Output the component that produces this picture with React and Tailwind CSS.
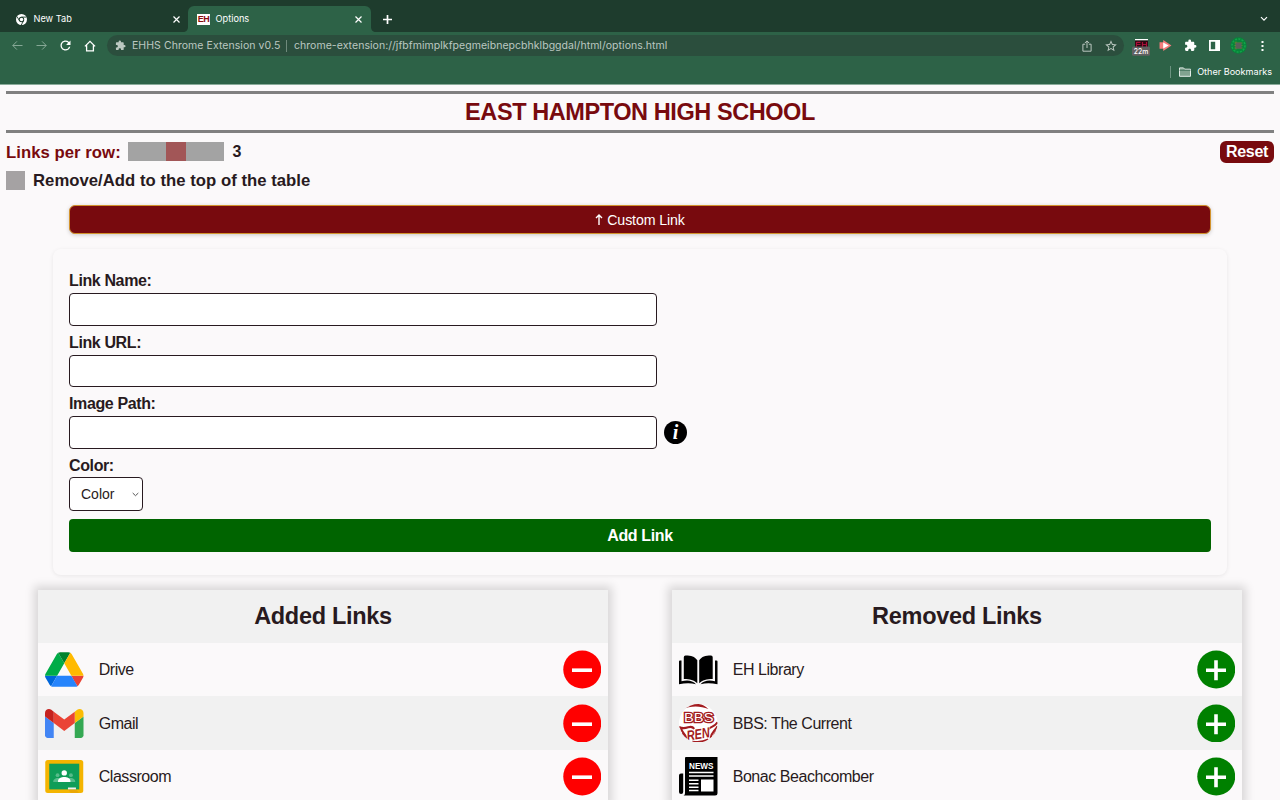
import React from "react";
import { MdExtension, MdRefresh, MdStarBorder } from "react-icons/md";

function ChromeLogo() {
  return (
    <svg className="h-[11px] w-[11px]" viewBox="0 0 22 22">
      <circle cx="11" cy="11" r="11" fill="#fff" />
      <circle cx="11" cy="11" r="5.4" fill="#1e3c2d" />
      <circle cx="11" cy="11" r="3.5" fill="#fff" />
      <g stroke="#1e3c2d" strokeWidth="1.8">
        <path d="M11 6.2h10M6.8 13.4 2 5M15.2 13.4 10.5 22" />
      </g>
    </svg>
  );
}

function CloseIcon() {
  return (
    <svg className="h-[7px] w-[7px]" viewBox="0 0 7 7" stroke="#fff" strokeWidth="1.2">
      <path d="m.5.5 6 6M6.500.5l-6 6" />
    </svg>
  );
}

function TabStrip() {
  return (
    <div className="flex h-8 items-end bg-[#1e3c2d] text-[9.2px] text-white">
      <div className="relative flex h-[26px] w-[188px] items-center pl-4 pr-[8px]">
        <ChromeLogo />
        <span className="ml-[6.500px] flex-1">New Tab</span>
        <CloseIcon />
        <svg className="absolute bottom-0 right-0 h-[5px] w-[5px]" viewBox="0 0 5 5">
          <path d="M5 0v5H0c3 0 5-2 5-5" fill="#2d6247" />
        </svg>
      </div>
      <div className="flex h-[26px] w-[183px] items-center rounded-t-[6px] bg-[#2d6247] pl-[9px] pr-[9px]">
        <span className="flex h-[11px] w-[13px] items-center justify-center bg-white font-['Liberation_Sans'] text-[9px] font-bold tracking-[-0.4px] text-[#8b0d10]">
          EH
        </span>
        <span className="ml-[5.500px] flex-1">Options</span>
        <CloseIcon />
      </div>
      <div className="relative flex h-[26px] flex-1 items-center justify-between pl-[12px] pr-[12px]">
        <svg className="absolute bottom-0 left-0 h-[5px] w-[5px]" viewBox="0 0 5 5">
          <path d="M0 0v5h5C2 5 0 3 0 0" fill="#2d6247" />
        </svg>
        <svg className="h-[9px] w-[9px]" viewBox="0 0 9 9" stroke="#fff" strokeWidth="1.700">
          <path d="M0 4.500h9M4.500 0v9" />
        </svg>
        <svg className="h-[6px] w-[8px]" viewBox="0 0 8 6" fill="none" stroke="#fff" strokeWidth="1.2">
          <path d="m1 1.2 3 3 3-3" />
        </svg>
      </div>
    </div>
  );
}

function Arrow({ flip }) {
  return (
    <svg className={flip ? "h-[11px] w-[11px] rotate-180" : "h-[11px] w-[11px]"} viewBox="0 0 11 11" fill="none" stroke="#86a896" strokeWidth="1">
      <path d="M10.500 5.500H.8M4.900 1.400.8 5.500l4.100 4.100" />
    </svg>
  );
}

function Toolbar() {
  return (
    <div className="h-[53px] border-b border-[#8aab9a] bg-[#2d6247]">
      <div className="flex h-[27px] items-center pl-3">
        <Arrow />
        <span className="w-[13px]" />
        <Arrow flip />
        <MdRefresh className="ml-[11px] h-[15px] w-[15px] text-white" />
        <svg className="ml-[11px] h-[12px] w-[12px]" viewBox="0 0 12 12" fill="none" stroke="#fff" strokeWidth="1.3">
          <path d="M.9 6.4 6 1.3l5.1 5.1M2.6 5.2v5.6h6.8V5.2" />
        </svg>
        <div className="ml-[11px] flex h-[21px] w-[1017px] items-center rounded-full bg-[#2b4e3d] pl-2 pr-[6px] text-[10.500px] text-[#bcc8c1]">
          <MdExtension className="h-[11px] w-[11px]" />
          <span className="ml-[6px] w-[149px] whitespace-nowrap pt-[2px] tracking-[0.06px]">EHHS Chrome Extension v0.5</span>
          <span className="ml-[5px] mr-[7px] h-3 w-px bg-[#6f8a7c]" />
          <span className="flex-1 whitespace-nowrap pt-[2px] tracking-[0.040px]">chrome-extension://jfbfmimplkfpegmeibnepcbhklbggdal/html/options.html</span>
          <svg className="h-[12px] w-[10px]" viewBox="0 0 10 12" fill="none" stroke="#bcc8c1" strokeWidth="1">
            <path d="M3.2 4.2H.9v7h8.2v-7H6.8M5 8V1M2.9 3 5 .9 7.1 3" />
          </svg>
          <MdStarBorder className="ml-[12px] h-[14px] w-[14px]" />
        </div>
        <svg className="ml-[8px] h-[17px] w-[18px] shrink-0 translate-y-[2px]" viewBox="0 0 18 17">
          <path d="M3 0h13v1.500H3z" fill="#fff" />
          <path d="M3 1.500h13V9H3z" fill="#2a0710" />
          <path d="M4.500 3v5M4.500 3.400h4M4.500 5.500h4M10.500 3v5M14.500 3v5M10.500 5.500h4" stroke="#a80f38" strokeWidth="1.200" fill="none" />
          <rect y="7.500" width="18" height="9.200" rx="1.500" fill="#616161" />
          <text x="1.800" y="14.800" textLength="14.500" lengthAdjust="spacingAndGlyphs" fontFamily="Inter" fontWeight="500" fontSize="7.200" fill="#fff">
            22m
          </text>
        </svg>
        <svg className="ml-[9px] h-[11px] w-[13px]" viewBox="0 0 13 12">
          <path d="M0 2.500h4V0l9 6-9 6V9.500H0z" fill="#f27c7c" />
          <path d="M4 2.800 10 6 4 9.400z" fill="#fff" />
        </svg>
        <MdExtension className="ml-[12px] h-[13px] w-[13px] text-white" />
        <svg className="ml-[12px] h-[11px] w-[11px]" viewBox="0 0 11 11">
          <path d="M0 0h11v11H0zM1.8 1.8v7.4h4.4V1.8z" fill="#fff" fillRule="evenodd" />
        </svg>
        <svg className="ml-[10px] h-[17px] w-[17px]" viewBox="0 0 17 17">
          <circle cx="8.5" cy="8.5" r="8.2" fill="#08843a" />
          <circle cx="8.5" cy="8.5" r="6.5" fill="none" stroke="#13a34b" strokeWidth="1.500" strokeDasharray="2 1.3" />
          <path d="M4.5 6h8M4.5 8.5h8M4.5 11h8M6 4.5v8" stroke="#b59322" strokeWidth=".5" />
          <rect x="5.6" y="5.6" width="6" height="6" fill="#5a5f5a" />
        </svg>
        <svg className="ml-[14px] h-[10px] w-[3px]" viewBox="0 0 3 10" fill="#fff">
          <rect x=".5" width="2" height="2" />
          <rect x=".5" y="4" width="2" height="2" />
          <rect x=".5" y="8" width="2" height="2" />
        </svg>
      </div>
      <div className="flex h-[25px] items-center justify-end pr-2 text-[9.100px] text-white">
        <span className="h-3 w-px bg-[#6c9380]" />
        <svg className="ml-2 h-[10px] w-[12px]" viewBox="0 0 12 10">
          <path d="M.5.9h4l1.2 1.3h5.8v7.1H.5z" fill="#81a390" stroke="#e2ebe6" strokeWidth="1" />
          <path d="M.5 3.3h11" stroke="#2d6247" strokeWidth=".7" />
        </svg>
        <span className="ml-[6px]">Other Bookmarks</span>
      </div>
    </div>
  );
}

function Field({ label, children }) {
  return (
    <div className="h-[61.500px]">
      <div className="flex h-[28.500px] items-center pt-[5px] text-[16px] font-bold tracking-[-0.380px]">{label}</div>
      <div className="flex items-center">
        <input className="h-[32.500px] w-[588px] rounded-[4px] border border-[#281a20] bg-white" />
        {children}
      </div>
    </div>
  );
}

function DriveIcon() {
  return (
    <svg className="h-[35px] w-[38.5px]" viewBox="0 0 87.3 78">
      <path d="m6.6 66.85 3.85 6.65c.8 1.4 1.95 2.5 3.3 3.3l13.75-23.8h-27.5c0 1.55.4 3.1 1.2 4.5z" fill="#0066da" />
      <path d="m43.65 25-13.75-23.8c-1.35.8-2.5 1.9-3.3 3.3l-25.4 44a9.06 9.06 0 0 0-1.2 4.5h27.5z" fill="#00ac47" />
      <path d="m73.55 76.8c1.35-.8 2.5-1.9 3.3-3.3l1.6-2.75 7.65-13.25c.8-1.4 1.2-2.95 1.2-4.5h-27.502l5.852 11.5z" fill="#ea4335" />
      <path d="m43.65 25 13.75-23.8c-1.35-.8-2.9-1.2-4.5-1.2h-18.5c-1.6 0-3.15.45-4.5 1.2z" fill="#00832d" />
      <path d="m59.8 53h-32.3l-13.75 23.8c1.35.8 2.9 1.2 4.5 1.2h50.8c1.6 0 3.15-.45 4.5-1.2z" fill="#2684fc" />
      <path d="m73.4 26.5-12.7-22c-.8-1.4-1.95-2.5-3.3-3.3l-13.75 23.8 16.15 28h27.45c0-1.55-.4-3.1-1.2-4.5z" fill="#ffba00" />
    </svg>
  );
}

function GmailIcon() {
  return (
    <svg className="h-[29px] w-[38.5px]" viewBox="52 42 88 66">
      <path fill="#4285f4" d="M58 108h14V74L52 59v43c0 3.32 2.69 6 6 6" />
      <path fill="#34a853" d="M120 108h14c3.32 0 6-2.69 6-6V59l-20 15" />
      <path fill="#fbbc04" d="M120 48v26l20-15v-8c0-7.42-8.47-11.65-14.4-7.2" />
      <path fill="#ea4335" d="M72 74V48l24 18 24-18v26L96 92" />
      <path fill="#c5221f" d="M52 51v8l20 15V48l-5.6-4.2c-5.94-4.45-14.4-.22-14.4 7.2" />
    </svg>
  );
}

function ClassroomIcon() {
  return (
    <svg className="h-[33px] w-[38.5px]" viewBox="0 0 38 33">
      <rect width="38" height="33" rx="2.5" fill="#f4b400" />
      <rect x="4" y="3.7" width="30" height="25.7" fill="#0f9d58" />
      <g fill="#57bb8a">
        <circle cx="12.3" cy="15.2" r="1.9" />
        <circle cx="25.7" cy="15.2" r="1.9" />
        <path d="M8 22c0-3 2.500-4 4.300-4s3 .5 4 1.500V22zM30 22c0-3-2.500-4-4.300-4s-3 .5-4 1.500V22z" />
      </g>
      <circle cx="19" cy="12.900" r="2.700" fill="#fff" />
      <path d="M12.800 22v-1c0-2.700 3.400-4 6.200-4s6.200 1.300 6.200 4v1z" fill="#fff" />
      <path d="M22.700 27.500h8v2h-8z" fill="#f1f1f1" />
      <path d="M22.700 29.400h8l3 3.600h-8z" fill="#e39c07" opacity=".6" />
    </svg>
  );
}

function LibraryIcon() {
  return (
    <svg className="h-[30px] w-[38.5px]" viewBox="0 0 38.500 30">
      <path d="M1 5.500h1.500v20.800c6-1.500 11-.9 14.500 3-5-1.600-11-1.500-17 0V6.500a1 1 0 0 1 1-1M37.500 5.500H36v20.800c-6-1.500-11-.9-14.500 3 5-1.600 11-1.500 17 0V6.500a1 1 0 0 0-1-1" />
      <path d="M6.500.6c6 0 9 1.100 11.800 4.600v23C15 25 11 23.900 4.800 23.900V2.300A1.700 1.700 0 0 1 6.500.6" />
      <path d="M32 .6c-6 0-9 1.100-11.800 4.600v23c3.300-3.200 7.300-4.300 13.500-4.300V2.300A1.700 1.700 0 0 0 32 .6" />
    </svg>
  );
}

function BbsIcon() {
  return (
    <svg className="h-[38.500px] w-[38.500px]" viewBox="0 0 38 38">
      <clipPath id="bbs-disc">
        <circle cx="19" cy="19" r="19" />
      </clipPath>
      <g clipPath="url(#bbs-disc)">
        <rect width="38" height="38" fill="#fff" />
        <path d="M3 5.500C11 1.500 21 1.500 29 5 23-2 11-2 3 5.500" fill="#a31c20" />
        <text x="5" y="18" textLength="29" lengthAdjust="spacingAndGlyphs" fontFamily="Liberation Sans" fontWeight="400" fontSize="13.500" fill="#fff" stroke="#a31c20" strokeWidth="2.600" paintOrder="stroke">
          BBS
        </text>
        <path d="M0 22.500c3 2 6 1.500 9 .5s5 0 6 1.500M2 24c1 5 4 5 5 9M38 18c-3 5-7 4-9 7M38 22c-3 5-6 6-7 12M37 27c-2 3-3 4-3 7M3 29c2 1 3 3 5 5M13 37c5 1 11 .5 16-2" fill="none" stroke="#a31c20" strokeWidth="2" />
        <text x="7.500" y="34.500" transform="rotate(-9 19 30)" textLength="23" lengthAdjust="spacingAndGlyphs" fontFamily="Liberation Sans" fontWeight="700" fontStyle="italic" fontSize="14" fill="#a31c20" stroke="#fff" strokeWidth="1.200" paintOrder="stroke">
          REN
        </text>
      </g>
    </svg>
  );
}

function NewsIcon() {
  return (
    <svg className="h-[38.500px] w-[38.500px]" viewBox="0 0 38.500 38.500">
      <path d="M7 0h31.500v36a2.500 2.500 0 0 1-2.500 2.500H4.500C6 38 6 37 6 35V1a1 1 0 0 1 1-1M4.200 16.500V35A2.100 2.100 0 0 1 0 35V18.500a2 2 0 0 1 2-2z" />
      <text x="10" y="11.500" textLength="24.500" lengthAdjust="spacingAndGlyphs" fontFamily="Liberation Sans" fontWeight="700" fontSize="9.200" fill="#fff">
        NEWS
      </text>
      <path d="M10 15.400h24.500M10 19h24.500M10 23.200h9.500M10 26.700h9.500M10 30.200h9.500M10 33.600h9.500" stroke="#fff" strokeWidth="1.500" />
      <path d="M22 22.500h12.500v12H22z" fill="#fff" />
    </svg>
  );
}

function LinkCard({ title, rows, add }) {
  return (
    <div className="w-[570px] bg-[#fbf9fa] shadow-[0_0_9px_4px_rgba(0,0,0,0.14)]">
      <h2 className="flex h-[53.300px] items-center justify-center bg-[#f1f1f1] pt-[2px] text-[23.500px] font-bold tracking-[-0.300px]">{title}</h2>
      {rows.map(([name, icon]) => (
        <div key={name} className="flex h-[53.400px] items-center pl-[7px] pr-[7px] pt-[0.500px] odd:bg-[#f1f1f1] even:bg-[#fbf9fa]">
          <span className="flex w-[53.700px] items-center">{icon}</span>
          <span className="flex-1 pt-[1px] text-[16px] tracking-[-0.450px]">{name}</span>
          <svg className="h-[38.500px] w-[38.500px]" viewBox="0 0 38.500 38.500">
            <circle cx="19.250" cy="19.500" r="19" fill={add ? "#008000" : "#ff0000"} />
            <path d={add ? "M9 20.200h20M19 10.200v20" : "M9 20.200h20"} stroke="#fff" strokeWidth="3.600" />
          </svg>
        </div>
      ))}
    </div>
  );
}

export default function App() {
  return (
    <div className="h-[800px] w-[1280px] overflow-hidden bg-[#fbf9fa] font-['Inter',sans-serif] leading-none">
      <TabStrip />
      <Toolbar />
      <main className="px-1.5 pt-1.5 font-['Liberation_Sans',sans-serif] text-[#281a20]">
        <h1 className="flex h-[41.500px] items-center justify-center border-y-[3.500px] border-[#808080] pt-px text-[23.500px] font-bold tracking-[-0.420px] text-[#780a0e]">
          EAST HAMPTON HIGH SCHOOL
        </h1>
        <div className="flex h-[38px] items-center text-[16.700px] font-bold">
          <span className="w-[122px] whitespace-nowrap pt-[3px] tracking-[0.050px] text-[#780a0e]">Links per row:</span>
          <div className="flex h-[19px] w-[96px] justify-center bg-[#a3a3a3]">
            <div className="w-[20px] bg-[#a25657]" />
          </div>
          <span className="ml-[8.500px] flex-1 pt-px text-[16px]">3</span>
          <button className="flex h-[22px] w-[54px] items-center justify-center rounded-[6px] bg-[#780a0e] pt-px text-[16px] tracking-[-0.300px] text-white">Reset</button>
        </div>
        <div className="flex h-[19px] items-center gap-2 text-[16.700px] font-bold">
          <span className="h-[19px] w-[19px] bg-[#a5a2a3]" />
          <span className="whitespace-nowrap pt-[2px] tracking-[0.030px]">Remove/Add to the top of the table</span>
        </div>
        <button className="mx-[63px] mt-[15px] flex h-[29px] w-[1142px] items-center justify-center rounded-[6px] border border-[#d2932c] bg-[#780a0e] pt-[3px] text-[14.200px] tracking-[-0.120px] text-white shadow-[0_1px_4px_rgba(0,0,0,0.2)]">
          <svg className="mr-[4px] h-[11px] w-[8px] -translate-y-px" viewBox="0 0 8 11" fill="none" stroke="#fff" strokeWidth="1.400">
            <path d="M4 11V1M1 4l3-3 3 3" />
          </svg>
          Custom Link
        </button>
        <section className="mx-[47px] mt-[15px] h-[326px] w-[1174px] rounded-[8px] px-4 pt-4 shadow-[0_1px_4px_rgba(0,0,0,0.08)]">
          <Field label="Link Name:" />
          <Field label="Link URL:" />
          <Field label="Image Path:">
            <span className="ml-[7px] flex h-[23px] w-[23px] items-center justify-center rounded-full bg-black font-['Liberation_Serif'] text-[20px] font-bold italic text-white">i</span>
          </Field>
          <div className="flex h-7 items-center pt-[5px] text-[16px] font-bold tracking-[-0.380px]">Color:</div>
          <div className="flex h-[34px] w-[74px] items-center justify-between rounded-[4px] border border-[#281a20] bg-white pl-[11px] pr-[3px] text-[14px]">
            Color
            <svg className="h-[5px] w-[7px]" viewBox="0 0 7 5" fill="none" stroke="#555" strokeWidth="1">
              <path d="m.7 1 2.800 2.700L6.300 1" />
            </svg>
          </div>
          <button className="mt-[8px] flex h-[32.500px] w-full items-center justify-center rounded-[4px] bg-[#006400] pt-[1px] text-[16px] font-bold tracking-[-0.380px] text-white">Add Link</button>
        </section>
        <div className="mt-[15px] flex gap-16 pl-8">
          <LinkCard
            title="Added Links"
            rows={[["Drive", <DriveIcon />], ["Gmail", <GmailIcon />], ["Classroom", <ClassroomIcon />]]}
          />
          <LinkCard
            add
            title="Removed Links"
            rows={[["EH Library", <LibraryIcon />], ["BBS: The Current", <BbsIcon />], ["Bonac Beachcomber", <NewsIcon />]]}
          />
        </div>
      </main>
    </div>
  );
}
